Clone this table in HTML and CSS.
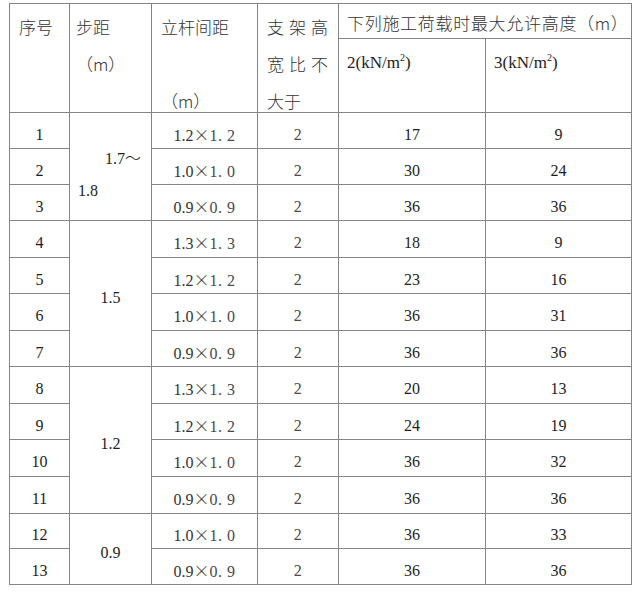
FILE: index.html
```html
<!DOCTYPE html>
<html lang="zh-CN">
<head>
<meta charset="utf-8">
<title>脚手架允许高度表</title>
<link rel="stylesheet" href="styles.css">
</head>
<body>
<table class="tbl">
  <colgroup>
    <col class="c1"><col class="c2"><col class="c3"><col class="c4"><col class="c5"><col class="c6">
  </colgroup>
  <thead>
    <tr class="h1">
      <th rowspan="2" class="hd p9"><div class="ln">序号</div></th>
      <th rowspan="2" class="hd p6"><div class="ln">步距</div><div class="ln">（m）</div></th>
      <th rowspan="2" class="hd p9"><div class="ln">立杆间距</div><div class="ln"></div><div class="ln last">（m）</div></th>
      <th rowspan="2" class="hd p9">
        <div class="ln sp"><span>支</span><span>架</span><span>高</span></div>
        <div class="ln sp"><span>宽</span><span>比</span><span>不</span></div>
        <div class="ln last">大于</div>
      </th>
      <th colspan="2" class="hd top p8">下列施工荷载时最大允许高度（m）</th>
    </tr>
    <tr class="h2">
      <th class="hd sub p8"><span class="lat">2(kN/m<sup>2</sup>)</span></th>
      <th class="hd sub p8"><span class="lat">3(kN/m<sup>2</sup>)</span></th>
    </tr>
  </thead>
  <tbody>
    <tr class="r36">
      <td>1</td>
      <td rowspan="3" class="grp g1"><div class="gl first">1.7<span class="cj">～</span></div><div class="gl">1.8</div></td>
      <td class="sz">1.2<span class="cj">×</span><span class="ss">1. 2</span></td>
      <td class="ss">2</td><td>17</td><td>9</td>
    </tr>
    <tr class="r36">
      <td>2</td>
      <td class="sz">1.0<span class="cj">×</span><span class="ss">1. 0</span></td>
      <td class="ss">2</td><td>30</td><td>24</td>
    </tr>
    <tr class="r36">
      <td>3</td>
      <td class="sz">0.9<span class="cj">×</span><span class="ss">0. 9</span></td>
      <td class="ss">2</td><td>36</td><td>36</td>
    </tr>
    <tr class="r37">
      <td>4</td>
      <td rowspan="4" class="grp">1.5</td>
      <td class="sz">1.3<span class="cj">×</span><span class="ss">1. 3</span></td>
      <td class="ss">2</td><td>18</td><td>9</td>
    </tr>
    <tr class="r36">
      <td>5</td>
      <td class="sz">1.2<span class="cj">×</span><span class="ss">1. 2</span></td>
      <td class="ss">2</td><td>23</td><td>16</td>
    </tr>
    <tr class="r37">
      <td>6</td>
      <td class="sz">1.0<span class="cj">×</span><span class="ss">1. 0</span></td>
      <td class="ss">2</td><td>36</td><td>31</td>
    </tr>
    <tr class="r36">
      <td>7</td>
      <td class="sz">0.9<span class="cj">×</span><span class="ss">0. 9</span></td>
      <td class="ss">2</td><td>36</td><td>36</td>
    </tr>
    <tr class="r37">
      <td>8</td>
      <td rowspan="4" class="grp">1.2</td>
      <td class="sz">1.3<span class="cj">×</span><span class="ss">1. 3</span></td>
      <td class="ss">2</td><td>20</td><td>13</td>
    </tr>
    <tr class="r36">
      <td>9</td>
      <td class="sz">1.2<span class="cj">×</span><span class="ss">1. 2</span></td>
      <td class="ss">2</td><td>24</td><td>19</td>
    </tr>
    <tr class="r37">
      <td>10</td>
      <td class="sz">1.0<span class="cj">×</span><span class="ss">1. 0</span></td>
      <td class="ss">2</td><td>36</td><td>32</td>
    </tr>
    <tr class="r37">
      <td>11</td>
      <td class="sz">0.9<span class="cj">×</span><span class="ss">0. 9</span></td>
      <td class="ss">2</td><td>36</td><td>36</td>
    </tr>
    <tr class="r35">
      <td>12</td>
      <td rowspan="2" class="grp">0.9</td>
      <td class="sz">1.0<span class="cj">×</span><span class="ss">1. 0</span></td>
      <td class="ss">2</td><td>36</td><td>33</td>
    </tr>
    <tr class="r36">
      <td>13</td>
      <td class="sz">0.9<span class="cj">×</span><span class="ss">0. 9</span></td>
      <td class="ss">2</td><td>36</td><td>36</td>
    </tr>
  </tbody>
</table>
</body>
</html>
```
FILE: styles.css
```css
html, body {
  background: #ffffff;
}
body {
  margin: 3px 0 0 9px;
  font-family: "Liberation Serif", "Noto Sans CJK SC", serif;
  color: #1e1e1e;
}
.tbl {
  border-collapse: collapse;
  table-layout: fixed;
  width: 622px;
}
.c1 { width: 60px; }
.c2 { width: 82px; }
.c3 { width: 106px; }
.c4 { width: 81px; }
.c5 { width: 147px; }
.c6 { width: 146px; }

.tbl th, .tbl td {
  border: 1px solid #858585;
  padding: 0;
}

/* header */
.h1 { height: 35px; }
.h2 { height: 73px; }
.tbl .hd {
  vertical-align: top;
  text-align: left;
  font-weight: 300;
  font-size: 17px;
  color: #333333;
  padding-top: 4px;
}
.hd .ln {
  height: 37px;
  line-height: 37px;
  font-family: "Noto Sans CJK SC", sans-serif;
  font-weight: 300;
  white-space: nowrap;
}
.hd .ln.last {
  height: 30px;
}
.tbl .p9 { padding-left: 9px; padding-right: 9px; }
.tbl .p6 { padding-left: 6px; }
.tbl .p8 { padding-left: 8px; }
.sp {
  display: flex;
  justify-content: space-between;
  width: 61px;
}
.tbl .top {
  font-family: "Noto Sans CJK SC", sans-serif;
  white-space: nowrap;
  vertical-align: top;
  padding-top: 9px;
  line-height: 20px;
  height: 24px;
  letter-spacing: 0.7px;
}
.tbl .sub {
  padding-top: 14px;
}
.lat {
  font-family: "Liberation Serif", serif;
  font-weight: 400;
  font-size: 17px;
  color: #222222;
  line-height: 20px;
}
.lat sup {
  font-size: 10px;
  vertical-align: 7px;
  line-height: 0;
}

/* body */
.r35 { height: 35px; }
.r36 { height: 36px; }
.r37 { height: 37px; }
.tbl td {
  text-align: center;
  vertical-align: middle;
  font-size: 16px;
  line-height: 20px;
  padding-top: 8px;
  padding-bottom: 0;
}
.cj {
  font-family: "Noto Sans CJK SC", sans-serif;
  font-weight: 300;
}
.ss {
  color: #4a4a4a;
  letter-spacing: 0.5px;
}
.sz {
  color: #333333;
}
.grp {
  color: #1e1e1e;
}
.tbl td.g1 {
  text-align: left;
  padding-top: 14px;
}
.gl {
  line-height: 34px;
  height: 34px;
  padding-left: 8px;
}
.gl.first {
  padding-left: 35px;
}
```
